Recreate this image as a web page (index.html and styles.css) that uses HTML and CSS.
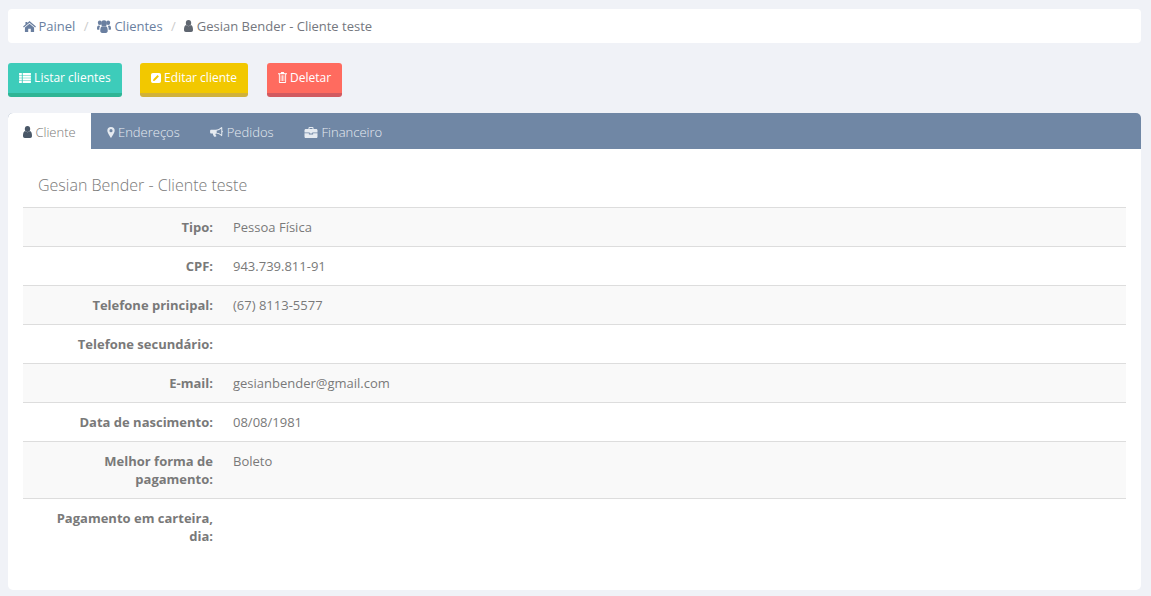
FILE: index.html
```html
<!DOCTYPE html>
<html lang="pt-BR">
<head>
<meta charset="utf-8">
<title>Gesian Bender - Cliente teste</title>
<link rel="stylesheet" href="styles.css">
</head>
<body>
<svg class="defs" width="0" height="0" aria-hidden="true">
  <symbol id="i-home" viewBox="0 0 14 12"><path d="M7 0 4.600 2.100V1H2.600v2.800L0 6.100l.8.9L7 1.800 13.200 7l.8-.9zM7 3 2 7.200V12h3.600V8.400h2.800V12H12V7.200z"/></symbol>
  <symbol id="i-users" viewBox="0 0 15 12" preserveAspectRatio="none"><circle cx="3" cy="2.600" r="2.100"/><circle cx="12" cy="2.600" r="2.100"/><circle cx="7.500" cy="3.200" r="3"/><path d="M0 8c0-2 .6-3 2-3 .6 0 1 .3 1.400.6C2.700 6.500 2.400 7.500 2.500 9 1 9 0 9 0 8zM15 8c0-2-.6-3-2-3-.6 0-1 .3-1.400.6.7.9 1 1.900.9 3.400 1.500 0 2.500 0 2.500-1zM3.500 10c0-2.500.7-4 2-4.200.6.5 1.200.7 2 .7s1.400-.2 2-.7c1.300.2 2 1.700 2 4.200 0 1.300-.8 2-2 2h-4c-1.200 0-2-.7-2-2z"/></symbol>
  <symbol id="i-user" viewBox="0 0 10 12" preserveAspectRatio="none"><circle cx="5" cy="3" r="3"/><path d="M0 10c0-3 .8-4.700 2.300-4.900C3 5.800 4 6.200 5 6.200s2-.4 2.700-1.100C9.200 5.300 10 7 10 10c0 1.300-.8 2-2 2H2c-1.200 0-2-.7-2-2z"/></symbol>
  <symbol id="i-list" viewBox="0 0 13 11"><path d="M0 0h3v2.400H0zM4 0h9v2.400H4zM0 2.900h3v2.300H0zM4 2.900h9v2.300H4zM0 5.700h3V8H0zM4 5.700h9V8H4zM0 8.500h3V11H0zM4 8.500h9V11H4z"/></symbol>
  <symbol id="i-edit" viewBox="0 0 11 11"><path fill-rule="evenodd" d="M2 0h7a2 2 0 0 1 2 2v7a2 2 0 0 1-2 2H2a2 2 0 0 1-2-2V2a2 2 0 0 1 2-2zM7.200 2.300 2.600 6.900 2.300 8.700l1.800-.3 4.600-4.600z"/></symbol>
  <symbol id="i-trash" viewBox="0 0 10 12"><path fill-rule="evenodd" d="M3 1.200 3.600 0h2.800L7 1.200h3v1.100H9V11a1 1 0 0 1-1 1H2a1 1 0 0 1-1-1V2.300H0V1.200zM2 2.300V11h6V2.300zM3 3.500h.8v6.500H3zM4.600 3.500h.8v6.500h-.8zM6.200 3.500H7v6.500h-.8z"/></symbol>
  <symbol id="i-marker" viewBox="0 0 8 12"><path fill-rule="evenodd" d="M4 0a4 4 0 0 1 4 4c0 1.600-2.500 6-4 8C2.500 10 0 5.600 0 4a4 4 0 0 1 4-4zm0 2.300a1.700 1.700 0 1 0 0 3.400 1.700 1.700 0 0 0 0-3.400z"/></symbol>
  <symbol id="i-bullhorn" viewBox="0 0 14 12"><path fill-rule="evenodd" d="M12.500 0c.5 0 .8.400.8.900V4c.4.200.7.500.7 1s-.3.800-.7 1v3.100c0 .5-.3.900-.8.900-1.800-1.700-3.800-2.700-6-2.900-.6.200-.8 1-.4 1.700.3.500.5.700.9 1.100-.3.700-1.700 1.100-2.500.7C3.800 9.600 3.100 8.500 3 7.100H1.300C.6 7.100 0 6.500 0 5.700V4.300C0 3.500.6 2.900 1.300 2.900H6C8.500 2.900 10.700 1.800 12.500 0zM12.200 1.900C10.800 3 9 3.700 7.200 4v2.200c1.800.2 3.600.9 5 2z"/></symbol>
  <symbol id="i-case" viewBox="0 0 13 11"><path fill-rule="evenodd" d="M4 2V1a1 1 0 0 1 1-1h3a1 1 0 0 1 1 1v1h2.700c.7 0 1.300.6 1.300 1.300V5.500H7.800v1.100H5.200V5.500H0V3.300C0 2.600.6 2 1.300 2zM5 1v1h3V1zM0 6.300h4.400v1.100h4.200V6.300H13v3.400c0 .7-.6 1.300-1.300 1.300H1.300C.6 11 0 10.400 0 9.700z"/></symbol>
</svg>

<nav class="breadcrumb">
  <a class="crumb" href="#"><svg class="ico ico-home"><use href="#i-home"/></svg> Painel</a>
  <span class="sep">/</span>
  <a class="crumb" href="#"><svg class="ico ico-users"><use href="#i-users"/></svg> Clientes</a>
  <span class="sep">/</span>
  <span class="crumb current"><svg class="ico ico-user"><use href="#i-user"/></svg> Gesian Bender - Cliente teste</span>
</nav>

<div class="actions">
  <a class="btn btn-teal" href="#"><svg class="ico ico-list"><use href="#i-list"/></svg> Listar clientes</a>
  <a class="btn btn-yellow" href="#"><svg class="ico ico-edit"><use href="#i-edit"/></svg> Editar cliente</a>
  <a class="btn btn-red" href="#"><svg class="ico ico-trash"><use href="#i-trash"/></svg> Deletar</a>
</div>

<section class="panel">
  <ul class="tabs">
    <li class="tab active"><svg class="ico ico-user"><use href="#i-user"/></svg> Cliente</li>
    <li class="tab"><svg class="ico ico-marker"><use href="#i-marker"/></svg> Endereços</li>
    <li class="tab"><svg class="ico ico-bullhorn"><use href="#i-bullhorn"/></svg> Pedidos</li>
    <li class="tab"><svg class="ico ico-case"><use href="#i-case"/></svg> Financeiro</li>
  </ul>
  <div class="panel-body">
    <h4 class="title">Gesian Bender - Cliente teste</h4>
    <div class="details">
      <div class="row"><div class="label">Tipo:</div><div class="value">Pessoa Física</div></div>
      <div class="row"><div class="label">CPF:</div><div class="value">943.739.811-91</div></div>
      <div class="row"><div class="label">Telefone principal:</div><div class="value">(67) 8113-5577</div></div>
      <div class="row"><div class="label">Telefone secundário:</div><div class="value"></div></div>
      <div class="row"><div class="label">E-mail:</div><div class="value">gesianbender@gmail.com</div></div>
      <div class="row"><div class="label">Data de nascimento:</div><div class="value">08/08/1981</div></div>
      <div class="row"><div class="label">Melhor forma de pagamento:</div><div class="value">Boleto</div></div>
      <div class="row"><div class="label">Pagamento em carteira, dia:</div><div class="value"></div></div>
    </div>
  </div>
</section>
</body>
</html>
```

FILE: styles.css
```css
* { box-sizing: border-box; }
html, body { height: 100%; }
body {
  margin: 0;
  padding: 9px 10px 6px 8px;
  background: #f0f2f7;
  font-family: "Open Sans", sans-serif;
  font-size: 13px;
  line-height: 18px;
  color: #797979;
  overflow: hidden;
}
.defs { position: absolute; }
a { text-decoration: none; }
.ico { display: inline-block; fill: currentColor; vertical-align: -1px; }
.ico-home { width: 13px; height: 11px; margin-right: -1px; }
.ico-users { width: 14px; height: 13px; vertical-align: -2px; }
.ico-user { width: 9px; height: 12px; }
.ico-list { width: 12px; height: 10px; }
.ico-edit { width: 10px; height: 10px; }
.ico-trash { width: 9px; height: 11px; }
.ico-marker { width: 8px; height: 11px; margin-left: 0.700px; }
.ico-bullhorn { width: 13px; height: 11px; }
.ico-case { width: 14px; height: 11px; }

.breadcrumb {
  display: flex;
  align-items: center;
  height: 34px;
  padding: 0 15px;
  background: #fff;
  border-radius: 4px;
}
.crumb { color: #6a7fa0; white-space: pre; }
.crumb.current { color: #74777e; }
.crumb.current .ico { color: #5f6670; }
.sep { color: #ccc; padding: 0 8.500px; }

.actions { display: flex; margin-top: 20px; }
.btn {
  display: block;
  height: 34px;
  padding: 5px 0 0 11px;
  border-radius: 3px;
  color: #fff;
  font-size: 12px;
  line-height: 20px;
  white-space: nowrap;
}
.btn-teal { width: 114px; background: #3dccba; border-bottom: 4px solid #2fb595; }
.btn-yellow { width: 108px; margin-left: 18px; background: #f2c800; border-bottom: 4px solid #d0b13a; }
.btn-red { width: 75px; margin-left: 19px; background: #ff6b5f; border-bottom: 4px solid #d15a60; }

.panel {
  margin-top: 16px;
  height: 477px;
  background: #fff;
  border-radius: 5px;
  overflow: hidden;
}
.tabs {
  display: flex;
  height: 36px;
  margin: 0;
  padding: 0;
  list-style: none;
  background: #7087a5;
}
.tab {
  padding: 10px 15.300px 0;
  color: #e6ebf1;
  font-weight: 300;
}
.tab.active { background: #fff; color: #797979; padding: 10px 15px 0; }
.tab.active .ico { color: #4a5868; }
.panel-body { padding: 0 15px; }
.title {
  margin: 0;
  height: 58px;
  padding: 26px 15px 0;
  font-size: 16px;
  font-weight: 300;
  line-height: 20px;
  color: #797979;
}
.details { border-top: 1px solid #ddd; }
.row { display: flex; border-top: 1px solid #ddd; }
.row:first-child { border-top: 0; }
.row:nth-child(odd) { background: #f9f9f9; }
.label {
  flex: 0 0 200px;
  padding: 10px;
  text-align: right;
  font-weight: 700;
}
.value { flex: 1; padding: 10px; }
```
